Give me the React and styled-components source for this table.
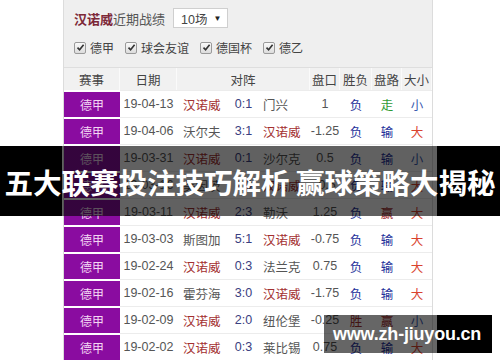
import React from "react";
import styled, { createGlobalStyle } from "styled-components";

const GlobalStyle = createGlobalStyle`
  html, body {
    margin: 0;
    padding: 0;
    background: #ffffff;
  }
  body {
    font-family: "Noto Sans CJK SC", "Liberation Sans", sans-serif;
  }
`;

const Page = styled.div`
  position: relative;
  width: 500px;
  height: 362px;
  overflow: hidden;
  background: #ffffff;
  padding-left: 63px;
  box-sizing: border-box;
`;

const Panel = styled.div`
  width: 370px;
  background: #efefef;
  border-left: 1px solid #dcdcdc;
  border-right: 1px solid #dcdcdc;
  box-sizing: border-box;
`;

const TitleRow = styled.div`
  display: flex;
  align-items: center;
  height: 36px;
  padding: 0 0 0 10px;
`;

const Title = styled.div`
  font-size: 13px;
  color: #555;
  margin-right: 8px;
`;

const Team = styled.span`
  color: #7c2737;
  font-weight: 700;
`;

const Select = styled.div`
  display: flex;
  align-items: center;
  gap: 6px;
  height: 18px;
  padding: 0 6px 0 7px;
  background: #fff;
  border: 1px solid #cfcfcf;
  font-size: 12.5px;
  color: #444;
  font-family: "Liberation Sans", "Noto Sans CJK SC", sans-serif;
`;

const Arrow = styled.span`
  font-size: 8px;
  color: #222;
`;

const FilterRow = styled.div`
  display: flex;
  align-items: center;
  height: 23px;
  padding: 0 0 8px 10px;
`;

const Filter = styled.label`
  display: flex;
  align-items: center;
  gap: 4px;
  margin-right: 11px;
  font-size: 12px;
  color: #444;
`;

const Box = styled.span`
  display: flex;
  align-items: center;
  justify-content: center;
  width: 10px;
  height: 10px;
  border: 1px solid #9a9a9a;
  border-radius: 2px;
  background: linear-gradient(#fafafa, #dcdcdc);
`;

const Check = () => (
  <svg width="9" height="9" viewBox="0 0 9 9">
    <path d="M1.5 4.6 L3.6 6.8 L7.6 1.8" fill="none" stroke="#333" strokeWidth="1.6" />
  </svg>
);

const Table = styled.div`
  display: grid;
  grid-template-columns: 56px 57px 53px 27px 53px 30px 32px 30px 30px;
  border-top: 1px solid #dedede;
`;

const Head = styled.div`
  grid-column: span ${(p) => p.span || 1};
  height: 22px;
  display: flex;
  align-items: center;
  justify-content: center;
  font-size: 12.5px;
  color: #444;
  background: #f1f1f1;
  border-right: 1px solid #fafafa;
  box-sizing: border-box;
`;

const Cell = styled.div`
  height: 27px;
  display: flex;
  align-items: center;
  justify-content: ${(p) => p.align || "center"};
  padding-left: ${(p) => (p.align ? "6px" : "0")};
  background: #fff;
  border-top: 1px solid #ececec;
  box-sizing: border-box;
  font-size: 12.5px;
  color: ${(p) => p.color || "#555"};
  font-family: ${(p) =>
    p.num ? '"Liberation Sans", sans-serif' : '"Noto Sans CJK SC", sans-serif'};
`;

const League = styled.div`
  height: 27px;
  display: flex;
  align-items: center;
  justify-content: center;
  background: #8a0ca0;
  border-top: 2px solid #fff;
  box-sizing: border-box;
  font-size: 12px;
  color: #f3d6f3;
`;

const Band = styled.div`
  position: absolute;
  left: 0;
  top: 146px;
  width: 500px;
  height: 70px;
  display: flex;
  align-items: center;
  justify-content: center;
  background: linear-gradient(
    to right,
    #000 0,
    #000 62px,
    rgba(0, 0, 0, 0.62) 62px,
    rgba(0, 0, 0, 0.62) 437px,
    #000 437px
  );
  color: #fff;
  font-size: 28.5px;
  font-weight: 700;
  white-space: nowrap;
`;

const Mark = styled.div`
  position: absolute;
  left: 324px;
  top: 315px;
  width: 168px;
  height: 38px;
  display: flex;
  align-items: center;
  padding-left: 9px;
  box-sizing: border-box;
  background: linear-gradient(
    to right,
    rgba(0, 0, 0, 0.6) 0,
    rgba(0, 0, 0, 0.6) 113px,
    #000 113px
  );
  color: #fff;
  font-family: "Liberation Sans", sans-serif;
  font-weight: 700;
  font-size: 18px;
  letter-spacing: -0.2px;
`;

const RED = "#a3302f";
const BLUE = "#23309a";
const LIGHTBLUE = "#3a5bb0";
const GREEN = "#2f9a34";
const ORANGE = "#d9432f";

const ME = "汉诺威";

const games = [
  ["19-04-13", ME, "0:1", "门兴", "1", "负", "走", "小"],
  ["19-04-06", "沃尔夫", "3:1", ME, "-1.25", "负", "输", "大"],
  ["19-03-31", ME, "0:1", "沙尔克", "0.5", "负", "输", "小"],
  ["19-03-16", "美因茨", "1:0", ME, "-0.5", "负", "输", "大"],
  ["19-03-11", ME, "2:3", "勒沃", "1.25", "负", "赢", "大"],
  ["19-03-03", "斯图加", "5:1", ME, "-0.75", "负", "输", "大"],
  ["19-02-24", ME, "0:3", "法兰克", "0.75", "负", "输", "大"],
  ["19-02-16", "霍芬海", "3:0", ME, "-1.75", "负", "输", "大"],
  ["19-02-09", ME, "2:0", "纽伦堡", "-0.25", "胜", "赢", "小"],
  ["19-02-02", ME, "0:3", "莱比锡", "0.75", "负", "输", "大"],
];

const resultColor = (v) => (v === "胜" || v === "赢" ? RED : v === "走" ? GREEN : BLUE);
const sizeColor = (v) => (v === "大" ? ORANGE : LIGHTBLUE);

const filters = ["德甲", "球会友谊", "德国杯", "德乙"];

export default function App() {
  return (
    <Page>
      <GlobalStyle />
      <Panel>
        <TitleRow>
          <Title>
            <Team>汉诺威</Team>近期战绩
          </Title>
          <Select>
            10场 <Arrow>▼</Arrow>
          </Select>
        </TitleRow>
        <FilterRow>
          {filters.map((f) => (
            <Filter key={f}>
              <Box>
                <Check />
              </Box>
              {f}
            </Filter>
          ))}
        </FilterRow>
        <Table>
          <Head>赛事</Head>
          <Head>日期</Head>
          <Head span={3}>对阵</Head>
          <Head>盘口</Head>
          <Head>胜负</Head>
          <Head>盘路</Head>
          <Head>大小</Head>
          {games.map((g) => (
            <React.Fragment key={g[0]}>
              <League>德甲</League>
              <Cell num>{g[0]}</Cell>
              <Cell align="flex-start" color={g[1] === ME ? RED : "#555"}>
                {g[1]}
              </Cell>
              <Cell num color="#3a4080">
                {g[2]}
              </Cell>
              <Cell align="flex-start" color={g[3] === ME ? RED : "#555"}>
                {g[3]}
              </Cell>
              <Cell num>{g[4]}</Cell>
              <Cell color={resultColor(g[5])}>{g[5]}</Cell>
              <Cell color={resultColor(g[6])}>{g[6]}</Cell>
              <Cell color={sizeColor(g[7])}>{g[7]}</Cell>
            </React.Fragment>
          ))}
        </Table>
      </Panel>
      <Band>五大联赛投注技巧解析 赢球策略大揭秘</Band>
      <Mark>www.zh-jiuyou.cn</Mark>
    </Page>
  );
}
